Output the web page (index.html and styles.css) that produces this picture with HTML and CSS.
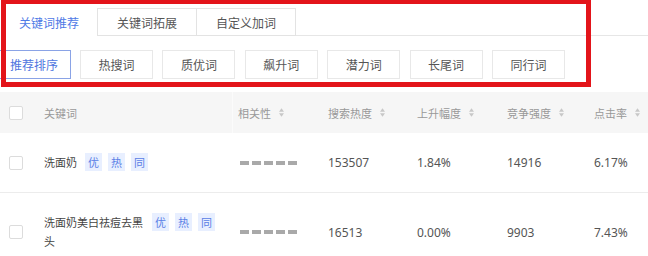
FILE: index.html
```html
<!DOCTYPE html>
<html lang="zh-CN">
<head>
<meta charset="utf-8">
<link rel="stylesheet" href="styles.css">
</head>
<body>
<div class="page">
  <div class="filters">
    <div class="tabs">
      <div class="tab active">关键词推荐</div>
      <div class="tab">关键词拓展</div>
      <div class="tab">自定义加词</div>
    </div>
    <div class="chips">
      <div class="chip active">推荐排序</div>
      <div class="chip">热搜词</div>
      <div class="chip">质优词</div>
      <div class="chip">飙升词</div>
      <div class="chip">潜力词</div>
      <div class="chip">长尾词</div>
      <div class="chip">同行词</div>
    </div>
  </div>
  <div class="highlight"></div>

  <div class="table">
    <div class="row head">
      <div class="cell"><span class="checkbox"></span></div>
      <div class="cell">关键词</div>
      <div class="cell rel-col">相关性<svg class="sort" viewBox="0 0 6 10"><path d="M3 0L6 4H0Z M3 10L0 6H6Z"/></svg></div>
      <div class="cell">搜索热度<svg class="sort" viewBox="0 0 6 10"><path d="M3 0L6 4H0Z M3 10L0 6H6Z"/></svg></div>
      <div class="cell">上升幅度<svg class="sort" viewBox="0 0 6 10"><path d="M3 0L6 4H0Z M3 10L0 6H6Z"/></svg></div>
      <div class="cell">竞争强度<svg class="sort" viewBox="0 0 6 10"><path d="M3 0L6 4H0Z M3 10L0 6H6Z"/></svg></div>
      <div class="cell">点击率<svg class="sort" viewBox="0 0 6 10"><path d="M3 0L6 4H0Z M3 10L0 6H6Z"/></svg></div>
    </div>
    <div class="row body">
      <div class="cell"><span class="checkbox"></span></div>
      <div class="cell kw"><span class="kw-text">洗面奶</span><span class="tags"><span class="tag">优</span><span class="tag">热</span><span class="tag">同</span></span></div>
      <div class="cell rel-col"><span class="dashes"><i></i><i></i><i></i><i></i><i></i></span></div>
      <div class="cell num">153507</div>
      <div class="cell num">1.84%</div>
      <div class="cell num">14916</div>
      <div class="cell num">6.17%</div>
    </div>
    <div class="row body">
      <div class="cell"><span class="checkbox"></span></div>
      <div class="cell kw"><span class="kw-text">洗面奶美白祛痘去黑头</span><span class="tags"><span class="tag">优</span><span class="tag">热</span><span class="tag">同</span></span></div>
      <div class="cell rel-col"><span class="dashes"><i></i><i></i><i></i><i></i><i></i></span></div>
      <div class="cell num">16513</div>
      <div class="cell num">0.00%</div>
      <div class="cell num">9903</div>
      <div class="cell num">7.43%</div>
    </div>
  </div>
</div>
</body>
</html>
```

FILE: styles.css
```css
* { box-sizing: border-box; }
html, body { margin: 0; padding: 0; background: #fff; }
body {
  font-family: "Noto Sans", "Noto Sans CJK SC", sans-serif;
  color: #444;
  width: 648px;
  height: 256px;
  overflow: hidden;
}
.page { position: relative; width: 648px; height: 256px; overflow: hidden; }

.filters { padding-top: 8px; }
.tabs {
  display: flex;
  height: 28px;
  border-bottom: 1px solid #e6e6e6;
}
.tab {
  height: 28px;
  width: 100px;
  border: 1px solid #e3e3e3;
  margin-left: -1px;
  display: flex;
  align-items: center;
  justify-content: center;
  font-size: 12px;
  color: #555;
  background: #fff;
  font-family: "Noto Sans CJK SC", sans-serif;
}
.tab.active {
  width: 98px;
  margin-left: 0;
  border-color: transparent;
  border-bottom-color: #fff;
  color: #4f7ae6;
}

.chips {
  display: flex;
  gap: 9.4px;
  margin-top: 14px;
  margin-left: -2.4px;
}
.chip {
  width: 73px;
  height: 29px;
  border: 1px solid #e8e8e8;
  display: flex;
  align-items: center;
  justify-content: center;
  font-size: 12px;
  color: #555;
  font-family: "Noto Sans CJK SC", sans-serif;
}
.chip.active {
  border-color: #8aa3e6;
  color: #4f76e0;
}

.highlight {
  position: absolute;
  left: 1px;
  top: -1px;
  width: 590px;
  height: 88px;
  border: 5px solid #e3141a;
}

.table { margin-top: 13px; }
.row {
  display: grid;
  grid-template-columns: 44px 188px 96px 89px 90px 87px 1fr;
}
.row.head {
  height: 41px;
  background: #f6f6f6;
  color: #999;
  font-size: 11px;
}
.row.head .cell { font-family: "Noto Sans CJK SC", sans-serif; }
.row.head .rel-col { border-left: 1px solid #fbfbfb; padding-left: 5px; }
.row.body {
  padding: 20px 0;
  border-bottom: 1px solid #ececec;
  font-size: 11px;
}
.cell {
  display: flex;
  align-items: center;
}
.rel-col { padding-left: 6px; }
.checkbox {
  display: block;
  width: 14px;
  height: 14px;
  margin-left: 9px;
  border: 1px solid #dcdcdc;
  border-radius: 2px;
  background: #fff;
}
.sort {
  width: 5px;
  height: 9px;
  margin-left: 8px;
  fill: #c8c8c8;
}
.kw { align-items: flex-start; }
.kw-text {
  max-width: 100px;
  line-height: 19px;
  font-family: "Noto Sans CJK SC", sans-serif;
  color: #444;
}
.tags {
  display: flex;
  gap: 6px;
  margin-left: 8px;
}
.tag {
  width: 17px;
  height: 18px;
  background: #e8efff;
  color: #5a80e6;
  display: flex;
  align-items: center;
  justify-content: center;
  font-size: 11px;
  font-family: "Noto Sans CJK SC", sans-serif;
}
.dashes { display: flex; gap: 3px; margin-left: 2px; }
.dashes i {
  display: block;
  width: 9px;
  height: 4px;
  background: #a9a9a9;
}
.num {
  font-size: 12px;
  color: #555;
}
```
